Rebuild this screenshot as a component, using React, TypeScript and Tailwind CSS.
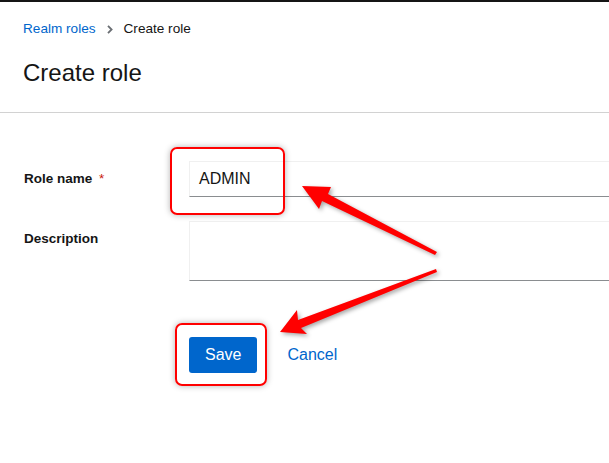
import React from "react";

export default function App() {
  const font = { fontFamily: '"Liberation Sans", Arial, sans-serif' };
  return (
    <div
      className="relative w-[609px] h-[463px] overflow-hidden bg-white border-t-2 border-[#151515]"
      style={font}
    >
      {/* Header */}
      <div className="px-6 pt-[17px] pb-[24px] border-b border-[#d2d2d2]">
        <nav className="flex items-center text-[13.6px] leading-[20px] -ml-px">
          <span className="text-[#0066cc]">Realm roles</span>
          <svg className="mx-[11px]" width="6" height="9" viewBox="0 0 6 9">
            <path d="M1 0.8 L4.6 4.5 L1 8.2" stroke="#6a6e73" strokeWidth="1.8" fill="none" />
          </svg>
          <span className="text-[#151515]">Create role</span>
        </nav>
        <h1 className="mt-[19px] text-[24px] leading-[30px] text-[#151515] -ml-px">Create role</h1>
      </div>

      {/* Form */}
      <div className="pt-[48px] pl-6">
        <div className="flex">
          <div className="w-[165px] shrink-0 pt-2 text-[13.5px] leading-[20px] font-bold text-[#151515]">
            Role name <span className="ml-[3px] font-normal text-[#c9190b]">*</span>
          </div>
          <div className="w-[500px] h-[36px] shrink-0 border border-[#f0f0f0] border-b-[#8a8d90] flex items-center pl-[9px] text-[16px] text-[#151515]">
            ADMIN
          </div>
        </div>
        <div className="flex mt-6">
          <div className="w-[165px] shrink-0 pt-2 text-[13.5px] leading-[20px] font-bold text-[#151515]">
            Description
          </div>
          <div className="w-[500px] h-[60px] shrink-0 border border-[#f0f0f0] border-b-[#8a8d90]" />
        </div>
        <div className="flex items-center mt-[56px] ml-[165px] gap-[14px]">
          <button className="h-[36px] px-4 rounded-[3px] bg-[#0066cc] text-white text-[16px]">Save</button>
          <button className="h-[36px] px-4 text-[#0066cc] text-[16px]">Cancel</button>
        </div>
      </div>

      {/* Annotations */}
      <div className="absolute left-[170px] top-[145px] w-[115px] h-[68px] rounded-[7px] border-2 border-[#ff0000] shadow-[0_0_6px_rgba(0,0,0,0.3)]" />
      <div className="absolute left-[175px] top-[321px] w-[92px] h-[63px] rounded-[7px] border-2 border-[#ff0000] shadow-[0_0_6px_rgba(0,0,0,0.3)]" />
      <svg
        className="absolute left-0 top-0 pointer-events-none"
        width="609"
        height="463"
        viewBox="0 -2 609 463"
        style={{ filter: "drop-shadow(2px 2px 2px rgba(0,0,0,0.35))" }}
      >
        <polygon
          points="302,182 331,183 328,190 437,248 435,251 322,197 319,205"
          fill="#ff0000"
        />
        <polygon
          points="280,328 297,306 298,316 436,265 437,268 301,324 307,330"
          fill="#ff0000"
        />
      </svg>
    </div>
  );
}
